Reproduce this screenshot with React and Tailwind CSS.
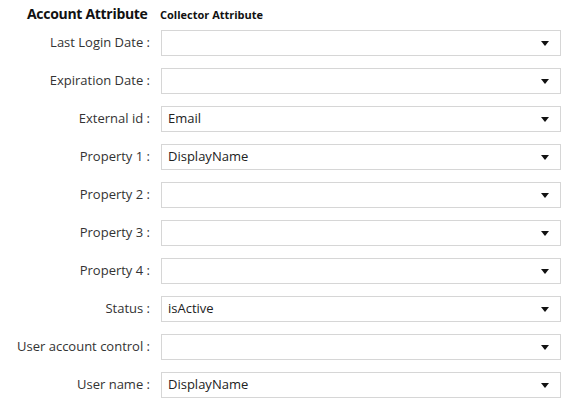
import React from "react";

const rows = [
  { label: "Last Login Date", value: "" },
  { label: "Expiration Date", value: "" },
  { label: "External id", value: "Email" },
  { label: "Property 1", value: "DisplayName" },
  { label: "Property 2", value: "" },
  { label: "Property 3", value: "" },
  { label: "Property 4", value: "" },
  { label: "Status", value: "isActive" },
  { label: "User account control", value: "" },
  { label: "User name", value: "DisplayName" },
];

function Caret() {
  return (
    <svg width="8" height="5" viewBox="0 0 8 5" className="shrink-0">
      <path d="M0 0h8L4 5z" fill="#111" />
    </svg>
  );
}

export default function App() {
  return (
    <div
      className="w-[570px] h-[404px] bg-white text-[#333]"
      style={{ fontFamily: '"Open Sans", "Liberation Sans", sans-serif' }}
    >
      {/* HEADER */}
      <div className="flex items-end h-[24px]">
        <div className="w-[160px] shrink-0 pl-[27px] text-[14px] tracking-[-0.3px] font-bold text-[#111] leading-[20px] whitespace-nowrap">
          Account Attribute
        </div>
        <div className="text-[11px] font-bold text-[#111] leading-[18px] whitespace-nowrap">
          Collector Attribute
        </div>
      </div>

      {/* ROWS */}
      <div className="flex flex-col gap-[12px] mt-[6px]">
        {rows.map((r) => (
          <div key={r.label} className="flex items-center h-[26px]">
            <div className="w-[150px] shrink-0 text-right text-[13px] whitespace-nowrap">
              {r.label}&nbsp;:
            </div>
            <div className="ml-[11px] w-[400px] h-[26px] border border-[#d6d6d6] flex items-center justify-between pl-[6px] pr-[11px]">
              <span className="text-[13px] text-[#222]">{r.value}</span>
              <Caret />
            </div>
          </div>
        ))}
      </div>
    </div>
  );
}
